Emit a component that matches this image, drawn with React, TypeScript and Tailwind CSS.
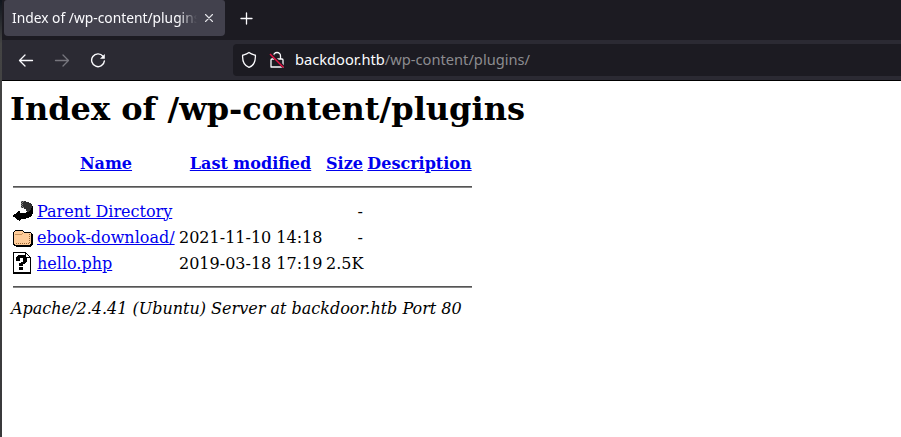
import React from "react";

function BackIcon() {
  return (
    <svg width="20" height="22" viewBox="0 0 20 22" shapeRendering="crispEdges" className="inline-block align-middle">
      <path d="M8 1h5v1h3v1h2v1h1v2h1v5h-3v1h-3v-1h-1V9h-2V8H8z" fill="#303030" />
      <path d="M8 1h1v1H8zM8 3h1v1H8zM8 5h1v1H8zM8 7h1v1H8zM9 2h1v1H9zM9 4h1v1H9zM9 6h1v1H9zM10 1h1v1h-1zM10 7h1v1h-1z" fill="#888" />
      <path d="M19 6h1v8h-1v2h-1v1h-2v1h-3v1H8v1H7v1H6v-1H4v-1H3v-1H2v-1H0v-2h1v-1h2v-1h1v-1h1v-1h2v2h6v-1h3v-1h1v-1h1V8h1z" fill="#000" />
    </svg>
  );
}

function FolderIcon() {
  return (
    <svg width="20" height="22" viewBox="0 0 20 22" shapeRendering="crispEdges" className="inline-block align-middle">
      <path d="M2 4h8v1h1v1h7v1h1v1h1v11h-1v1h-1v1H3v-1H1v-1H0V6h1V5h1z" fill="#000" />
      <path d="M2 5h8v1h1v1h7v11h-1v1H2v-1H1V6h1z" fill="#ffcc99" />
      <path d="M2 8h7v1H2zM9 7h1v1H9z" fill="#c8935e" />
      <path d="M3 17h1v1H3zM5 17h1v1H5zM7 17h1v1H7zM9 17h1v1H9zM11 17h1v1h-1zM13 17h1v1h-1zM15 17h1v1h-1zM16 8h1v1h-1zM16 10h1v1h-1zM16 12h1v1h-1zM16 14h1v1h-1zM16 16h1v1h-1z" fill="#996633" />
    </svg>
  );
}

function UnknownIcon() {
  return (
    <svg width="20" height="22" viewBox="0 0 20 22" shapeRendering="crispEdges" className="inline-block align-middle">
      <path d="M0 0h13v1h1v1h1v1h1v1h1v1h1v17H0z" fill="#000" />
      <path d="M1 1h11v5h5v14H1z" fill="#fff" />
      <path d="M13 2h1v1h1v1h1v1h-3z" fill="#fff" />
      <path d="M5 3h7v1h1v1h1v5h-1v1h-1v1h-2v2H6v-3h2v-1h2V6H7v3H3V5h1V4h1zM6 15h4v3H6z" fill="#000" />
    </svg>
  );
}

function Rule() {
  return (
    <tr>
      <td colSpan={5} className="p-px">
        <hr className="my-2 h-0.5 border-t border-b border-t-[#555] border-b-[#888]" />
      </td>
    </tr>
  );
}

const link = "text-[#0000ee] underline";

const rows = [
  { Icon: BackIcon, name: "Parent Directory", date: "", size: "-" },
  { Icon: FolderIcon, name: "ebook-download/", date: "2021-11-10 14:18", size: "-" },
  { Icon: UnknownIcon, name: "hello.php", date: "2019-03-18 17:19", size: "2.5K" },
];

export default function App() {
  return (
    <div className="flex h-[437px] w-[901px] overflow-hidden bg-white">
      <div className="w-0.5 shrink-0 bg-linear-to-b from-[#10151d] via-[#444] via-10% to-[#39393b]" />
      <div className="flex min-w-0 grow flex-col">
        <div className="flex h-10 shrink-0 items-start bg-[#1c1b22] pl-0.5 font-['Noto_Sans','DejaVu_Sans',sans-serif] text-[#fbfbfe]">
          <div className="flex h-9 w-[221px] items-center rounded-b-[4px] rounded-t-[3px] bg-[#42414d] pl-2">
            <div className="w-[185px] overflow-hidden whitespace-nowrap text-[13.8px] leading-9 mask-r-from-90% mask-r-to-100%">
              Index of /wp-content/plugins
            </div>
            <svg width="10" height="10" viewBox="0 0 10 10" className="ml-[7px]" stroke="#e4e4e9" strokeWidth="1.1" strokeLinecap="round">
              <path d="M1.5 1.5l7 7M8.500 1.5l-7 7" />
            </svg>
          </div>
          <svg width="14" height="14" viewBox="0 0 14 14" className="ml-[15px] mt-3" stroke="#fbfbfe" strokeWidth="1.3" strokeLinecap="round">
            <path d="M6.500 1v11M1 6.500h11" />
          </svg>
        </div>
        <div className="flex h-[41px] shrink-0 items-center border-b border-black bg-[#2b2a33]">
          <svg width="16" height="16" viewBox="0 0 16 16" className="ml-4" fill="none" stroke="#fbfbfe" strokeWidth="1.3" strokeLinecap="round" strokeLinejoin="round">
            <path d="M14.500 8.500h-13M7 3L1.500 8.500L7 14" />
          </svg>
          <svg width="16" height="16" viewBox="0 0 16 16" className="ml-5" fill="none" stroke="#77767e" strokeWidth="1.3" strokeLinecap="round" strokeLinejoin="round">
            <path d="M1.500 8.500h13M9 3l5.500 5.500L9 14" />
          </svg>
          <svg width="16" height="16" viewBox="0 0 16 16" className="ml-5" fill="none" stroke="#fbfbfe" strokeWidth="1.4" strokeLinecap="round">
            <path d="M13 4.200A6.400 6.400 0 1 0 14.400 8.900" />
            <path d="M14.800 2v4.700H10z" fill="#fbfbfe" stroke="none" />
          </svg>
          <div className="ml-[127px] flex h-8 grow items-center rounded-l-[4px] bg-[#1c1b22]">
            <svg width="16" height="18" viewBox="0 0 16 18" className="ml-2" fill="none" stroke="#fbfbfe" strokeWidth="1.3" strokeLinejoin="round">
              <path d="M8 1.500C6 3 4 3.500 1.600 4.200C1.300 10 3 14.500 8 16.300C13 14.500 14.700 10 14.400 4.200C12 3.500 10 3 8 1.500z" />
            </svg>
            <svg width="16" height="18" viewBox="0 0 16 18" className="ml-3" fill="none" stroke="#fbfbfe" strokeWidth="1.3" strokeLinejoin="round">
              <path d="M4.500 8V5a3.500 3.500 0 0 1 7 0v3M3 8h10a1 1 0 0 1 1 1v7H2V9a1 1 0 0 1 1-1z" />
              <path d="M1.500 2.500L14.500 16" stroke="#1c1b22" strokeWidth="3" />
              <path d="M1 3L14.500 16.500" stroke="#e80f43" strokeWidth="1.4" />
            </svg>
            <span className="mb-0.5 ml-[10px] whitespace-nowrap font-['Noto_Sans','DejaVu_Sans',sans-serif] text-[14.67px] leading-[30px] text-[#fbfbfe]">
              backdoor.htb<span className="text-[#8c8c90]">/wp-content/plugins/</span>
            </span>
          </div>
        </div>
        <main className="px-2 pt-[9px] font-['DejaVu_Serif',serif] text-base leading-[19px] text-black">
          <h1 className="mb-[21px] h-[38px] whitespace-nowrap text-[32px] font-bold leading-[38px]">Index of /wp-content/plugins</h1>
          <table className="w-[465px] table-fixed border-separate border-spacing-0.5">
            <colgroup>
              <col className="w-[22px]" />
              <col className="w-[140px]" />
              <col className="w-[145px]" />
              <col className="w-[39px]" />
              <col className="w-[107px]" />
            </colgroup>
            <thead>
              <tr className="h-6 whitespace-nowrap">
                <th className="p-px" />
                <th className="p-px"><a className={link}>Name</a></th>
                <th className="p-px"><a className={link}>Last modified</a></th>
                <th className="p-px"><a className={link}>Size</a></th>
                <th className="p-px"><a className={link}>Description</a></th>
              </tr>
            </thead>
            <tbody>
              <Rule />
              {rows.map(({ Icon, name, date, size }) => (
                <tr key={name} className="h-6 whitespace-nowrap">
                  <td className="p-px leading-[0]"><Icon /></td>
                  <td className="p-px"><a className={link}>{name}</a></td>
                  <td className="p-px text-right">{date}</td>
                  <td className="p-px text-right">{size}</td>
                  <td className="p-px" />
                </tr>
              ))}
              <Rule />
            </tbody>
          </table>
          <address className="pl-px whitespace-nowrap italic">Apache/2.4.41 (Ubuntu) Server at backdoor.htb Port 80</address>
        </main>
      </div>
    </div>
  );
}
